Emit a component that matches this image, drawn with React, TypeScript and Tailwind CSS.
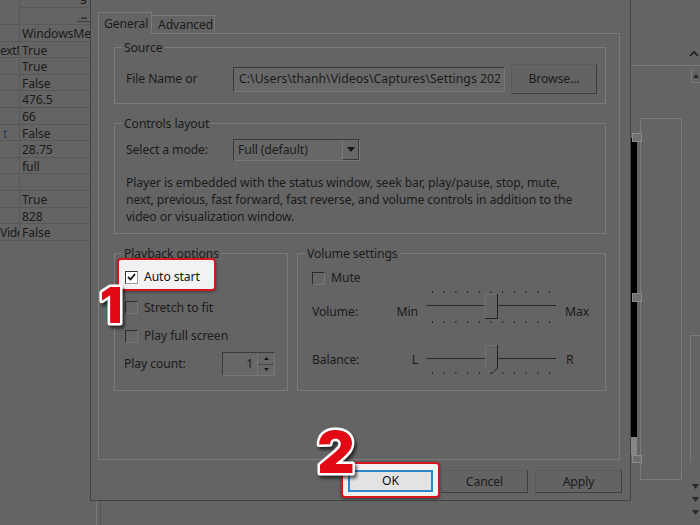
import React from "react";

const rows: [string, string][] = [
  ["", "WindowsMedi"],
  ["extM", "True"],
  ["", "True"],
  ["", "False"],
  ["", "476.5"],
  ["", "66"],
  ["t", "False"],
  ["", "28.75"],
  ["", "full"],
  ["", ""],
  ["", "True"],
  ["", "828"],
  ["Vide", "False"],
];

function LeftGrid() {
  return (
    <div className="w-[90px] flex flex-col shrink-0">
      <div className="h-[8px] flex">
        <div className="w-[20px] border-r border-[#585858]" />
        <div className="flex-1 border-b border-[#585858] relative overflow-hidden">
          <span className="absolute right-[3px] top-[-9px] text-[#1b1b1b]">g</span>
        </div>
      </div>
      <div className="h-[17px] flex border-b border-[#585858]">
        <div className="w-[20px] border-r border-[#585858]" />
        <div className="flex-1 flex justify-end items-start">
          <div className="w-[13px] h-[14px] border-b border-[#3c3c3c] flex items-center justify-center text-[10px] font-bold tracking-[-1px] text-[#222]">
            ...
          </div>
        </div>
      </div>
      {rows.map(([a, b], i) => (
        <div key={i} className="h-[16.6px] flex border-b border-[#585858] leading-[17px]">
          <div
            className={
              "w-[20px] border-r border-[#585858] overflow-hidden whitespace-nowrap tracking-[-0.4px] " +
              (a === "t" ? "pl-[3px] text-[#2c3b5c]" : "")
            }
          >
            {a}
          </div>
          <div className="flex-1 overflow-hidden whitespace-nowrap pl-[2px]">{b}</div>
        </div>
      ))}
      <div className="flex-1" />
    </div>
  );
}

function ChevronUp() {
  return (
    <svg width="10" height="7" viewBox="0 0 10 7">
      <path d="M1 6 L5 2 L9 6" stroke="#1e1e1e" strokeWidth="1.6" fill="none" />
    </svg>
  );
}

function RightArea() {
  return (
    <div className="w-[70px] flex flex-col shrink-0">
      <div className="h-[66px] border-b border-[#7a7a7a] flex items-end justify-end pr-[1px] pb-[8px]">
        <ChevronUp />
      </div>
      <div className="h-[52px] flex justify-end pt-[3px]">
        <div className="w-[9px] h-[14px] border-l border-b border-[#7a7a7a] flex items-center justify-center">
          <svg width="6" height="4" viewBox="0 0 6 4">
            <path d="M0 4 L3 0 L6 4 Z" fill="#2a2a2a" />
          </svg>
        </div>
      </div>
      <div className="h-[362px] flex">
        <div className="w-[10px] relative pt-[20px]">
          <div className="w-[7px] h-[299px] bg-black" />
          <div className="w-[7px] h-[18px] bg-[#858585]" />
          <div className="absolute left-[2px] top-[15px] w-[10px] h-[9px] bg-[#6f6f6f] border border-[#8a8a8a]" />
          <div className="absolute left-[2px] top-[175px] w-[10px] h-[9px] bg-[#6f6f6f] border border-[#8a8a8a]" />
          <div className="absolute left-[2px] top-[337px] w-[10px] h-[8px] bg-[#6f6f6f] border border-[#8a8a8a]" />
        </div>
        <div className="w-[42px] border border-[#7a7a7a]" />
        <div className="w-[8px]" />
        <div className="flex-1 flex flex-col">
          <div className="h-[217px]" />
          <div className="h-[127px] border-l border-t border-[#7a7a7a]" />
        </div>
      </div>
      <div className="flex-1 flex flex-col items-end pr-[1px] pt-[4px] gap-[8px]">
        {[0, 1, 2].map((i) => (
          <svg key={i} width="7" height="5" viewBox="0 0 7 5">
            <path d="M0 0 L3.5 5 L7 0 Z" fill="#2a2a2a" />
          </svg>
        ))}
      </div>
    </div>
  );
}

function CheckBox({ checked = false, bright = false }: { checked?: boolean; bright?: boolean }) {
  return (
    <div
      className={
        "w-[13px] h-[13px] shrink-0 border flex items-center justify-center " +
        (bright
          ? "bg-white border-[#9a9a9a] border-t-[#333] border-l-[#333]"
          : "bg-[#666666] border-[#777] border-t-[#2c2c2c] border-l-[#2c2c2c]")
      }
    >
      {checked && (
        <svg width="9" height="8" viewBox="0 0 9 8">
          <path d="M1 4 L3.5 6.5 L8 1" stroke="#111" strokeWidth="1.8" fill="none" />
        </svg>
      )}
    </div>
  );
}

function Btn({ label, w = 87, h = 23 }: { label: string; w?: number; h?: number }) {
  return (
    <div
      className="shrink-0 bg-[#636363] border border-[#5a5a5a] border-b-[#3e3e3e] border-r-[#3e3e3e] flex items-center justify-center pt-[1px]"
      style={{ width: w, height: h }}
    >
      {label}
    </div>
  );
}

function Ticks({ y }: { y: number }) {
  return (
    <>
      {Array.from({ length: 11 }).map((_, i) => (
        <rect key={i} x={6 + i * 11.7} y={y} width="1" height="2" fill="#262626" />
      ))}
    </>
  );
}

function VolumeSlider() {
  return (
    <svg width="130" height="42" viewBox="0 0 130 42">
      <Ticks y={0} />
      <line x1="0" y1="14.5" x2="59" y2="14.5" stroke="#2a2a2a" />
      <line x1="72" y1="14.5" x2="130" y2="14.5" stroke="#2a2a2a" />
      <path d="M59 27.5 H71.5 V3" stroke="#222" fill="none" />
      <path d="M59 27 V3.5 H71" stroke="#727272" fill="none" />
      <Ticks y={30} />
    </svg>
  );
}

function BalanceSlider() {
  return (
    <svg width="130" height="40" viewBox="0 0 130 40">
      <line x1="0" y1="18.5" x2="59" y2="18.5" stroke="#2a2a2a" />
      <line x1="72" y1="18.5" x2="130" y2="18.5" stroke="#2a2a2a" />
      <path d="M71.5 5 V28 L65.5 34" stroke="#222" fill="none" />
      <path d="M65 34 L59.5 28 V5.5 H71" stroke="#727272" fill="none" />
      <Ticks y={32} />
    </svg>
  );
}

function Dialog() {
  return (
    <div className="absolute left-[90px] top-0 w-[541px] h-[501px] bg-[#646464] border-x border-b border-[#444] flex flex-col">
      <div className="flex items-end h-[21px] mt-[12px] ml-[7px] relative z-10">
        <div className="h-[22px] w-[54px] border-x border-t border-[#7a7a7a] bg-[#646464] pl-[5px] pt-[1px] mb-[-1px] flex items-center">
          General
        </div>
        <div className="h-[18px] w-[63px] border-t border-r border-[#7a7a7a] pl-[6px] pt-[1px] flex items-center">
          Advanced
        </div>
      </div>
      <div className="ml-[7px] mr-[10px] h-[427px] border border-[#7a7a7a] pl-[15px] pr-[13px] flex flex-col">
        <fieldset className="mt-[4px] border border-[#7a7a7a] min-w-0">
          <legend className="ml-[7px] px-[2px] leading-[19px]">Source</legend>
          <div className="flex items-center pl-[11px] pr-[8px] pt-[7px] pb-[9px]">
            <div className="w-[107px] shrink-0 pt-[1px]">File Name or</div>
            <div className="w-[272px] h-[25px] shrink-0 bg-[#686868] border border-[#777] border-t-[#3a3a3a] border-l-[#3a3a3a] flex items-center pl-[5px] pr-[4px] pt-[1px]">
              <div className="overflow-hidden whitespace-nowrap tracking-[0.05px]">
                C:\Users\thanh\Videos\Captures\Settings 2021-05-06
              </div>
            </div>
            <div className="ml-[6px]">
              <Btn label="Browse..." w={86} h={30} />
            </div>
          </div>
        </fieldset>

        <fieldset className="mt-[10px] border border-[#7a7a7a] min-w-0">
          <legend className="ml-[7px] px-[2px] leading-[19px]">Controls layout</legend>
          <div className="pl-[11px] pt-[6px] pb-[8px]">
            <div className="flex items-center">
              <div className="w-[107px] shrink-0 pt-[1px]">Select a mode:</div>
              <div className="w-[127px] h-[22px] flex border border-[#777] border-t-[#3a3a3a] border-l-[#3a3a3a] bg-[#676767]">
                <div className="flex-1 flex items-center pl-[4px] pt-[1px]">Full (default)</div>
                <div className="w-[17px] border-l border-[#777] border-b border-r border-b-[#3a3a3a] border-r-[#3a3a3a] flex items-center justify-center">
                  <svg width="8" height="5" viewBox="0 0 8 5">
                    <path d="M0 0 H8 L4 5 Z" fill="#151515" />
                  </svg>
                </div>
              </div>
            </div>
            <div className="mt-[12px] leading-[17px] whitespace-nowrap pt-[1px]">
              Player is embedded with the status window, seek bar, play/pause, stop, mute,
              <br />
              next, previous, fast forward, fast reverse, and volume controls in addition to the
              <br />
              video or visualization window.
            </div>
          </div>
        </fieldset>

        <div className="flex mt-[10px] gap-[9px]">
          <fieldset className="w-[174px] h-[147px] border border-[#7a7a7a] min-w-0">
            <legend className="ml-[7px] px-[2px] leading-[19px]">Playback options</legend>
            <div className="pl-[10px] pt-[2px]">
              <div className="h-[28px] flex items-center gap-[6px]">
                <CheckBox checked />
                <span className="pt-[1px]">Auto start</span>
              </div>
              <div className="h-[29px] flex items-center gap-[6px]">
                <CheckBox />
                <span className="pt-[1px]">Stretch to fit</span>
              </div>
              <div className="h-[28px] flex items-center gap-[6px]">
                <CheckBox />
                <span className="pt-[1px]">Play full screen</span>
              </div>
              <div className="h-[28px] flex items-center -ml-[1px]">
                <div className="w-[98px] shrink-0 pt-[1px]">Play count:</div>
                <div className="w-[53px] h-[24px] flex border border-[#777] border-t-[#3a3a3a] border-l-[#3a3a3a] bg-[#676767]">
                  <div className="flex-1 flex items-center justify-end pr-[4px] pt-[1px]">1</div>
                  <div className="w-[17px] flex flex-col border-l border-[#777]">
                    <div className="flex-1 flex items-center justify-center border-b border-[#4a4a4a]">
                      <svg width="5" height="3" viewBox="0 0 5 3">
                        <path d="M0 3 L2.5 0 L5 3 Z" fill="#151515" />
                      </svg>
                    </div>
                    <div className="flex-1 flex items-center justify-center">
                      <svg width="5" height="3" viewBox="0 0 5 3">
                        <path d="M0 0 H5 L2.5 3 Z" fill="#151515" />
                      </svg>
                    </div>
                  </div>
                </div>
              </div>
            </div>
          </fieldset>

          <fieldset className="flex-1 h-[147px] border border-[#7a7a7a] min-w-0">
            <legend className="ml-[7px] px-[2px] leading-[19px]">Volume settings</legend>
            <div className="pl-[14px] pt-[2px]">
              <div className="h-[26px] flex items-center gap-[6px]">
                <CheckBox />
                <span className="pt-[1px]">Mute</span>
              </div>
              <div className="h-[42px] flex items-center">
                <div className="w-[73px] shrink-0 pt-[1px]">Volume:</div>
                <div className="w-[33px] shrink-0 text-right pt-[1px]">Min</div>
                <div className="ml-[8px] w-[130px] shrink-0">
                  <VolumeSlider />
                </div>
                <div className="ml-[9px] pt-[1px]">Max</div>
              </div>
              <div className="h-[40px] mt-[7px] flex items-center">
                <div className="w-[73px] shrink-0 pt-[1px]">Balance:</div>
                <div className="w-[33px] shrink-0 text-right pt-[1px]">L</div>
                <div className="ml-[8px] w-[130px] shrink-0">
                  <BalanceSlider />
                </div>
                <div className="ml-[10px] pt-[1px]">R</div>
              </div>
            </div>
          </fieldset>
        </div>
      </div>
      <div className="flex justify-end gap-[7px] pr-[8px] mt-[10px]">
        <Btn label="OK" />
        <Btn label="Cancel" />
        <Btn label="Apply" />
      </div>
    </div>
  );
}

function Badge({ n, w, h, size, base }: { n: string; w: number; h: number; size: number; base: number }) {
  return (
    <svg
      width={w}
      height={h}
      viewBox={`0 0 ${w} ${h}`}
      className="overflow-visible [filter:drop-shadow(2px_3px_1.5px_rgba(0,0,0,0.6))]"
    >
      <text
        x={w / 2}
        y={base}
        textAnchor="middle"
        fontFamily="Inter, Roboto, 'DejaVu Sans', sans-serif"
        fontWeight={900}
        fontSize={size}
        fill="#e10a14"
        stroke="#ffffff"
        strokeWidth={5}
        strokeLinejoin="round"
        paintOrder="stroke"
      >
        {n}
      </text>
    </svg>
  );
}

export default function App() {
  return (
    <div className="relative w-[700px] h-[525px] overflow-hidden bg-[#646464] font-['Noto_Sans',sans-serif] text-[12.2px] tracking-[-0.1px] text-[#1b1b1b] leading-none">
      <div className="flex h-full">
        <LeftGrid />
        <div className="w-[540px] shrink-0 flex flex-col">
          <div className="flex-1" />
          <div className="h-[25px] flex pl-[6px] gap-[3px]">
            <div className="w-px bg-[#7a7a7a]" />
            <div className="w-px bg-[#555]" />
          </div>
        </div>
        <RightArea />
      </div>

      <Dialog />

      {/* highlight 1 */}
      <div className="absolute left-[117px] top-[258px] w-[99px] h-[33px] rounded-[4px] border-2 border-[#d3171f] bg-[#f2f2f2] shadow-[0_1px_3px_rgba(0,0,0,0.4)] flex items-center pl-[6px] pt-[5px] gap-[6px] text-[#111]">
        <CheckBox checked bright />
        <span className="pt-[1px]">Auto start</span>
      </div>
      <div className="absolute left-[99px] top-[278px]">
        <Badge n="1" w={24} h={50} size={50} base={45} />
      </div>

      {/* highlight 2 */}
      <div className="absolute left-[341px] top-[462px] w-[99px] h-[36px] rounded-[4px] border-2 border-[#d3171f] bg-[#f2f2f2] shadow-[0_1px_3px_rgba(0,0,0,0.4)] pl-[5px] pt-[6px]">
        <div className="w-[85px] h-[22px] border-2 border-[#2f86c9] bg-[#e3e3e3] flex items-center justify-center pt-[1px] text-[#111]">
          OK
        </div>
      </div>
      <div className="absolute left-[314px] top-[424px]">
        <Badge n="2" w={44} h={54} size={58} base={49} />
      </div>
    </div>
  );
}
